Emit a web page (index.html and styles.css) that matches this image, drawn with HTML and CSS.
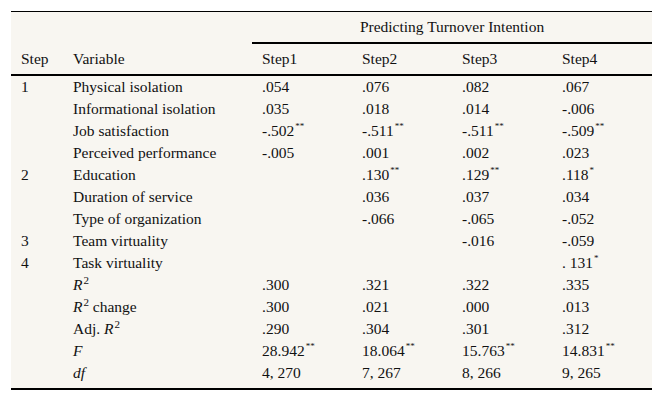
FILE: index.html
```html
<!DOCTYPE html>
<html>
<head>
<meta charset="utf-8">
<link rel="stylesheet" href="styles.css">
</head>
<body>
<div class="page">
<table class="reg">
  <colgroup>
    <col class="c-step"><col class="c-var"><col class="c-num"><col class="c-num"><col class="c-num"><col class="c-num">
  </colgroup>
  <thead>
    <tr class="h1">
      <th></th><th></th>
      <th colspan="4" class="span">Predicting Turnover Intention</th>
    </tr>
    <tr class="h2">
      <th>Step</th><th>Variable</th><th>Step1</th><th>Step2</th><th>Step3</th><th>Step4</th>
    </tr>
  </thead>
  <tbody>
    <tr><td>1</td><td>Physical isolation</td><td>.054</td><td>.076</td><td>.082</td><td>.067</td></tr>
    <tr><td></td><td>Informational isolation</td><td>.035</td><td>.018</td><td>.014</td><td>-.006</td></tr>
    <tr><td></td><td>Job satisfaction</td><td>-.502<sup>**</sup></td><td>-.511<sup>**</sup></td><td>-.511<sup>**</sup></td><td>-.509<sup>**</sup></td></tr>
    <tr><td></td><td>Perceived performance</td><td>-.005</td><td>.001</td><td>.002</td><td>.023</td></tr>
    <tr><td>2</td><td>Education</td><td></td><td>.130<sup>**</sup></td><td>.129<sup>**</sup></td><td>.118<sup>*</sup></td></tr>
    <tr><td></td><td>Duration of service</td><td></td><td>.036</td><td>.037</td><td>.034</td></tr>
    <tr><td></td><td>Type of organization</td><td></td><td>-.066</td><td>-.065</td><td>-.052</td></tr>
    <tr><td>3</td><td>Team virtuality</td><td></td><td></td><td>-.016</td><td>-.059</td></tr>
    <tr><td>4</td><td>Task virtuality</td><td></td><td></td><td></td><td>. 131<sup>*</sup></td></tr>
    <tr><td></td><td><i>R</i><sup class="pw">2</sup></td><td>.300</td><td>.321</td><td>.322</td><td>.335</td></tr>
    <tr><td></td><td><i>R</i><sup class="pw">2</sup> change</td><td>.300</td><td>.021</td><td>.000</td><td>.013</td></tr>
    <tr><td></td><td>Adj. <i>R</i><sup class="pw">2</sup></td><td>.290</td><td>.304</td><td>.301</td><td>.312</td></tr>
    <tr><td></td><td><i>F</i></td><td>28.942<sup>**</sup></td><td>18.064<sup>**</sup></td><td>15.763<sup>**</sup></td><td>14.831<sup>**</sup></td></tr>
    <tr class="last"><td></td><td><i>df</i></td><td>4, 270</td><td>7, 267</td><td>8, 266</td><td>9, 265</td></tr>
  </tbody>
</table>
</div>
</body>
</html>
```

FILE: styles.css
```css
html, body {
  margin: 0;
  padding: 0;
  background: #ffffff;
}

.page {
  padding: 11px 0 0 11px;
}

.reg {
  width: 641px;
  table-layout: fixed;
  border-collapse: separate;
  border-spacing: 0;
  background: #f8f6f1;
  border-top: 1px solid #000;
  border-bottom: 2px solid #000;
  font-family: "Liberation Serif", "Times New Roman", serif;
  font-size: 15.5px;
  color: #111;
}

.c-step { width: 52px; }
.c-var { width: 189px; }
.c-num { width: 100px; }

.reg th {
  font-weight: normal;
  text-align: left;
  padding: 0 10px;
  vertical-align: top;
}

.h1 th {
  line-height: 30px;
  height: 30px;
}

.h1 .span {
  text-align: center;
  border-bottom: 2px solid #000;
  padding: 0;
}

.h2 th {
  line-height: 30px;
  height: 30px;
  border-bottom: 2px solid #000;
}

.reg td {
  padding: 0 10px;
  line-height: 22px;
  height: 22px;
  vertical-align: top;
  white-space: nowrap;
}

.reg tr.last td {
  padding-bottom: 4px;
}

.reg sup {
  font-size: 9px;
  line-height: 0;
  vertical-align: 7px;
  margin-left: 1px;
}

.reg sup.pw {
  font-size: 11px;
  vertical-align: 6px;
  margin-left: 1px;
}
```
